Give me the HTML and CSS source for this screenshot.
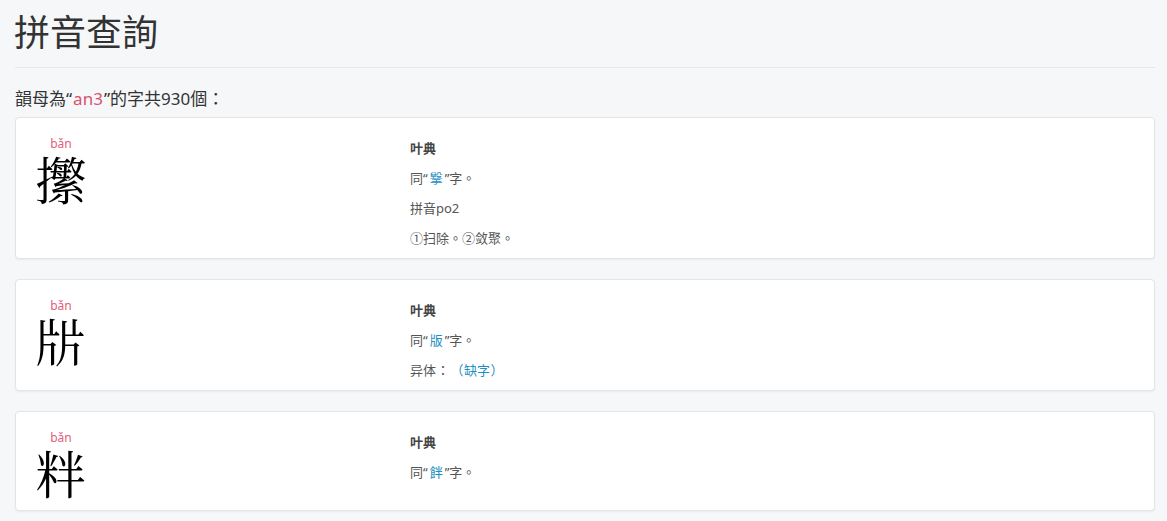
FILE: index.html
```html
<!DOCTYPE html>
<html>
<head>
  <meta charset="utf-8">
  <title>拼音查詢</title>
  <link rel="stylesheet" href="styles.css">
</head>
<body>
  <div class="container">
    <h1 class="page-title">拼音查詢</h1>
    <hr class="divider">
    <p class="summary">韻母為“<span class="code">an3</span>”的字共930個：</p>

    <!-- result cards -->
    <div class="card">
      <div class="char-col">
        <div class="pinyin">bǎn</div>
        <div class="zi">㩯</div>
      </div>
      <div class="def-col">
        <p class="src">叶典</p>
        <p>同“<a href="#">㩓</a>”字。</p>
        <p>拼音po2</p>
        <p>①扫除。②敛聚。</p>
      </div>
    </div>

    <div class="card">
      <div class="char-col">
        <div class="pinyin">bǎn</div>
        <div class="zi">㸞</div>
      </div>
      <div class="def-col">
        <p class="src">叶典</p>
        <p>同“<a href="#">版</a>”字。</p>
        <p>异体<span class="punct">：</span><a href="#" class="cjk"><span class="punct">（</span>缺字<span class="punct">）</span></a></p>
      </div>
    </div>

    <div class="card">
      <div class="char-col">
        <div class="pinyin">bǎn</div>
        <div class="zi">䉽</div>
      </div>
      <div class="def-col">
        <p class="src">叶典</p>
        <p>同“<a href="#">䬳</a>”字。</p>
      </div>
    </div>
  </div>
</body>
</html>
```

FILE: styles.css
```css
body {
  margin: 0;
  background-color: #f6f7f9;
  color: #333;
  font-family: "Noto Sans", "Noto Sans CJK TC", sans-serif;
  font-feature-settings: "chws" 0, "halt" 0, "palt" 0;
  text-spacing-trim: space-all;
}

.container {
  padding: 0 12px 0 15px;
}

.page-title {
  margin: 0;
  padding-top: 5px;
  font-size: 36px;
  font-weight: 400;
  line-height: 50px;
  margin-left: -1px;
  color: #333;
  font-family: "Noto Sans CJK TC", sans-serif;
}

.divider {
  border: 0;
  border-top: 1px solid #e6e7ea;
  margin: 12px 0 18px;
}

.summary {
  margin: 0 0 5px;
  font-size: 17px;
  line-height: 26px;
}

.summary .code {
  color: #d9536f;
  padding: 0 1px;
}

/* Card */
.card {
  display: flex;
  background: #fff;
  border: 1px solid #e3e4e6;
  border-radius: 4px;
  box-shadow: 0 1px 2px rgba(0, 0, 0, 0.05);
  margin-bottom: 20px;
  padding: 20px 15px 0;
}

.char-col {
  width: 379px;
  padding-bottom: 10px;
}

.pinyin {
  width: 60px;
  text-align: center;
  font-size: 12px;
  line-height: 12px;
  color: #e0607e;
}

.zi {
  width: 60px;
  text-align: center;
  font-size: 51px;
  line-height: 56px;
  color: #000;
  font-family: "Noto Serif CJK TC", "Noto Serif CJK SC", "Noto Sans CJK TC", serif;
}

.def-col {
  flex: 1;
  font-size: 13px;
  color: #555;
}

.def-col p {
  margin: 0 0 10px;
  line-height: 20px;
}

.def-col .src {
  font-weight: 700;
  color: #444;
}

.def-col a {
  color: #1f8fc4;
  text-decoration: none;
  padding: 0 2px;
}

.def-col a.cjk {
  padding: 0;
  font-family: "Noto Sans CJK TC", sans-serif;
}

/* keep full-width punctuation full width */
.punct {
  display: inline-block;
  width: 14px;
  text-align: center;
  font-family: "Noto Sans CJK TC", sans-serif;
}
```
